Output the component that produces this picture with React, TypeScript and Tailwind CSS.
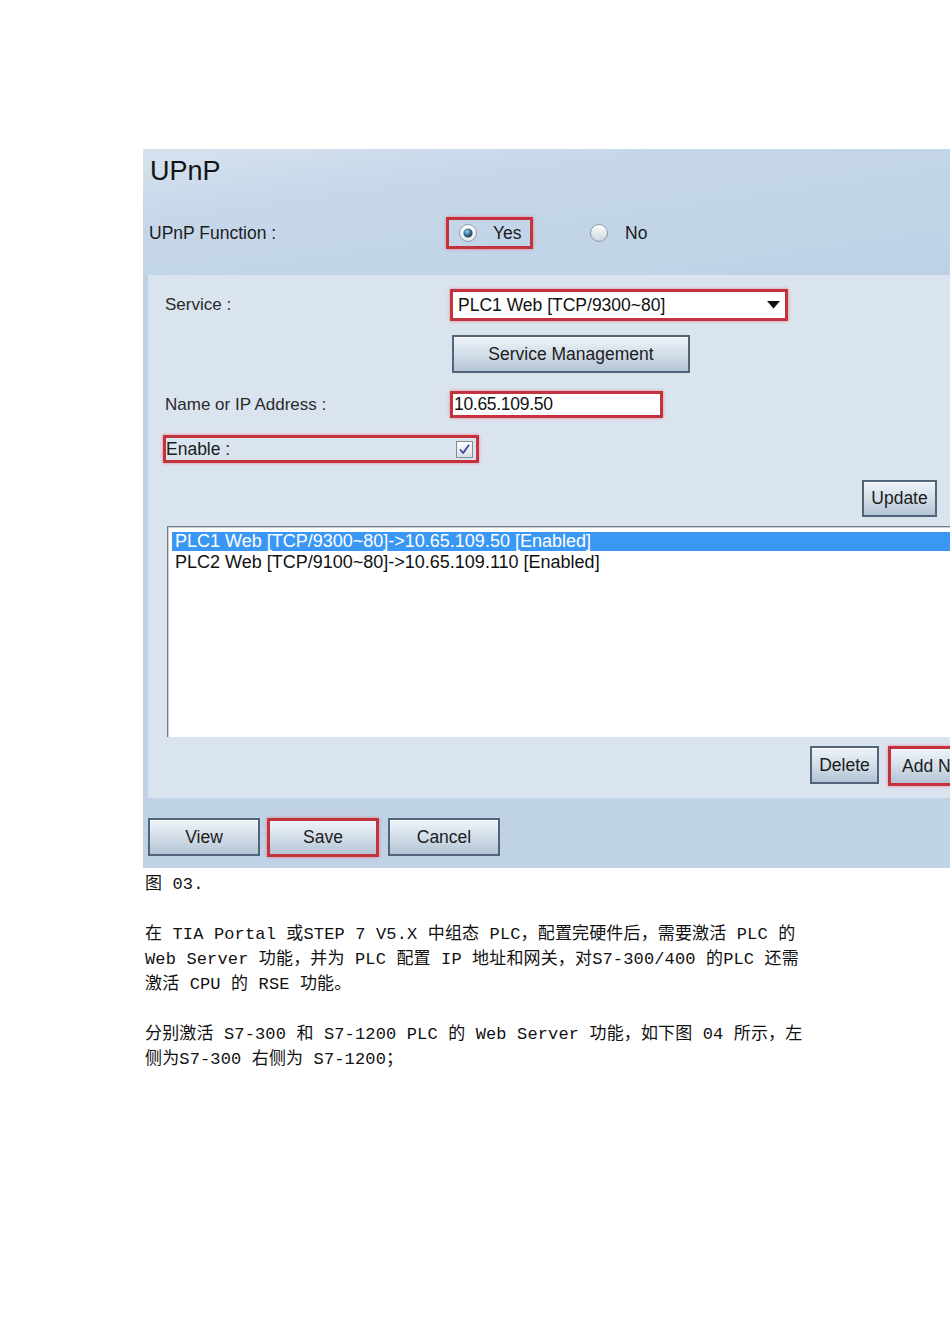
import React from 'react';

const ui = { fontFamily: "'Liberation Sans', Arial, sans-serif" };
const doc = { fontFamily: "'Liberation Mono', 'Noto Sans CJK SC', monospace" };

const btn =
  'flex items-center justify-center border-2 border-[#51647a] bg-[linear-gradient(#eef3f8,#d3dee9_50%,#b4c4d4)] text-[17.5px] text-[#1c1c1c] shadow-[inset_0_1px_0_#ffffff]';
const redBox = 'border-[3px] border-[#c4323e] shadow-[0_0_3px_rgba(235,90,100,0.7)]';

function Radio({ on }: { on?: boolean }) {
  return (
    <svg width="20" height="20" viewBox="0 0 20 20">
      <defs>
        <linearGradient id={on ? 'ro' : 'rf'} x1="0" y1="0" x2="0" y2="1">
          <stop offset="0" stopColor="#ffffff" />
          <stop offset="1" stopColor={on ? '#e4e9ee' : '#cdd4da'} />
        </linearGradient>
        <radialGradient id="dot" cx="0.4" cy="0.35" r="0.7">
          <stop offset="0" stopColor="#a8d4ea" />
          <stop offset="0.5" stopColor="#3b7598" />
          <stop offset="1" stopColor="#163a52" />
        </radialGradient>
      </defs>
      <circle cx="10" cy="10" r="8.5" fill={`url(#${on ? 'ro' : 'rf'})`} stroke="#8d9ba8" strokeWidth="1" />
      {on && <circle cx="10" cy="10" r="4.6" fill="url(#dot)" />}
    </svg>
  );
}

function Checkbox() {
  return (
    <svg width="17" height="17" viewBox="0 0 17 17">
      <defs>
        <linearGradient id="cb" x1="0" y1="0" x2="0" y2="1">
          <stop offset="0" stopColor="#ffffff" />
          <stop offset="1" stopColor="#d9dfe6" />
        </linearGradient>
      </defs>
      <rect x="0.5" y="0.5" width="16" height="16" fill="url(#cb)" stroke="#7f8d9b" />
      <path d="M4.5 9 L7.2 12 L12.5 4.5" fill="none" stroke="#33489a" strokeWidth="1.8" strokeLinecap="round" strokeLinejoin="round" />
    </svg>
  );
}

export default function App() {
  return (
    <div className="w-[950px] h-[1344px] bg-white overflow-hidden">
      <div className="pt-[149px] pl-[143px]">
        <div style={ui} className="w-[860px] h-[719px] flex flex-col bg-[#c0d3e6]">
          {/* header */}
          <div className="h-[126px] bg-[linear-gradient(172deg,#d6e2ee_0%,#c6d7e9_30%,#bdd1e6_100%)]">
            <div className="pt-[5px] pl-[7px] text-[27px] leading-[34px] text-[#141414]">UPnP</div>
            <div className="mt-[29px] flex items-center h-[32px]">
              <div className="pl-[6px] w-[303px] text-[17.5px] text-[#1c1c1c]">UPnP Function :</div>
              <div className={`${redBox} w-[87px] h-[32px] flex items-center pl-[9px] gap-[15px]`}>
                <Radio on />
                <span className="text-[17.5px] text-[#1c1c1c]">Yes</span>
              </div>
              <div className="ml-[56px] flex items-center gap-[16px]">
                <Radio />
                <span className="text-[17.5px] text-[#1c1c1c]">No</span>
              </div>
            </div>
          </div>

          {/* inner panel */}
          <div className="ml-[5px] h-[523px] bg-[#dae4ef] pt-[14px] flex flex-col text-[#2a2a2a]">
            <div className="flex items-center h-[32px]">
              <div className="pl-[17px] w-[302px] text-[17px]">Service :</div>
              <div className={`${redBox} w-[338px] h-[32px] bg-white flex items-center justify-between pl-[5px] pr-[5px]`}>
                <span className="text-[17.5px] text-[#111]">PLC1 Web [TCP/9300~80]</span>
                <svg width="13" height="8" viewBox="0 0 13 8">
                  <path d="M0 0 H13 L6.5 7.5 Z" fill="#111" />
                </svg>
              </div>
            </div>

            <div className={`${btn} ml-[304px] mt-[14px] w-[238px] h-[38px]`}>Service Management</div>

            <div className="flex items-center h-[27px] mt-[18px]">
              <div className="pl-[17px] w-[302px] text-[17px]">Name or IP Address :</div>
              <div className={`${redBox} w-[213px] h-[27px] bg-white flex items-center pl-[1px]`}>
                <span className="text-[17.5px] text-[#111] tracking-[-0.3px]">10.65.109.50</span>
              </div>
            </div>

            <div className={`${redBox} ml-[15px] mt-[17px] w-[316px] h-[28px] flex items-center justify-between pr-[3px]`}>
              <span className="text-[17.5px] text-[#1c1c1c]">Enable :</span>
              <Checkbox />
            </div>

            <div className={`${btn} ml-[714px] mt-[17px] w-[75px] h-[37px]`}>Update</div>

            <div className="ml-[19px] mt-[9px] h-[211px] border-t border-l border-[#707c89] bg-white">
              <div className="h-full border-t border-l border-[#c9d0d8] pt-[4px] pl-[3px]">
                <div className="h-[19px] bg-[#3a97f4] text-white text-[18px] leading-[19px] pl-[3px]">
                  PLC1 Web [TCP/9300~80]-&gt;10.65.109.50 [Enabled]
                </div>
                <div className="h-[22px] text-[#111] text-[18px] leading-[22px] pl-[3px]">
                  PLC2 Web [TCP/9100~80]-&gt;10.65.109.110 [Enabled]
                </div>
              </div>
            </div>

            <div className="flex items-start mt-[9px]">
              <div className={`${btn} ml-[662px] w-[69px] h-[38px]`}>Delete</div>
              <div className={`${redBox} ml-[9px] w-[100px] h-[40px] bg-[linear-gradient(#eef3f8,#d3dee9_50%,#b4c4d4)] flex items-center pl-[11px] text-[17.5px] text-[#1c1c1c]`}>
                Add New
              </div>
            </div>
          </div>

          {/* bottom buttons */}
          <div className="flex items-start pt-[20px] pl-[5px]">
            <div className={`${btn} w-[112px] h-[38px]`}>View</div>
            <div className={`${redBox} ml-[7px] w-[112px] h-[39px] bg-[linear-gradient(#eef3f8,#d3dee9_50%,#b4c4d4)] flex items-center justify-center text-[17.5px] text-[#1c1c1c]`}>
              Save
            </div>
            <div className={`${btn} ml-[9px] w-[112px] h-[38px]`}>Cancel</div>
          </div>
        </div>
      </div>

      <div style={doc} className="ml-[145px] mt-[4px] text-[17px] leading-[25px] text-[#111] whitespace-pre tracking-[0.15px]">
        <div>图 03.</div>
        <div>&nbsp;</div>
        <div>在 TIA Portal 或STEP 7 V5.X 中组态 PLC，配置完硬件后，需要激活 PLC 的</div>
        <div>Web Server 功能，并为 PLC 配置 IP 地址和网关，对S7-300/400 的PLC 还需</div>
        <div>激活 CPU 的 RSE 功能。</div>
        <div>&nbsp;</div>
        <div>分别激活 S7-300 和 S7-1200 PLC 的 Web Server 功能，如下图 04 所示，左</div>
        <div>侧为S7-300 右侧为 S7-1200；</div>
      </div>
    </div>
  );
}
